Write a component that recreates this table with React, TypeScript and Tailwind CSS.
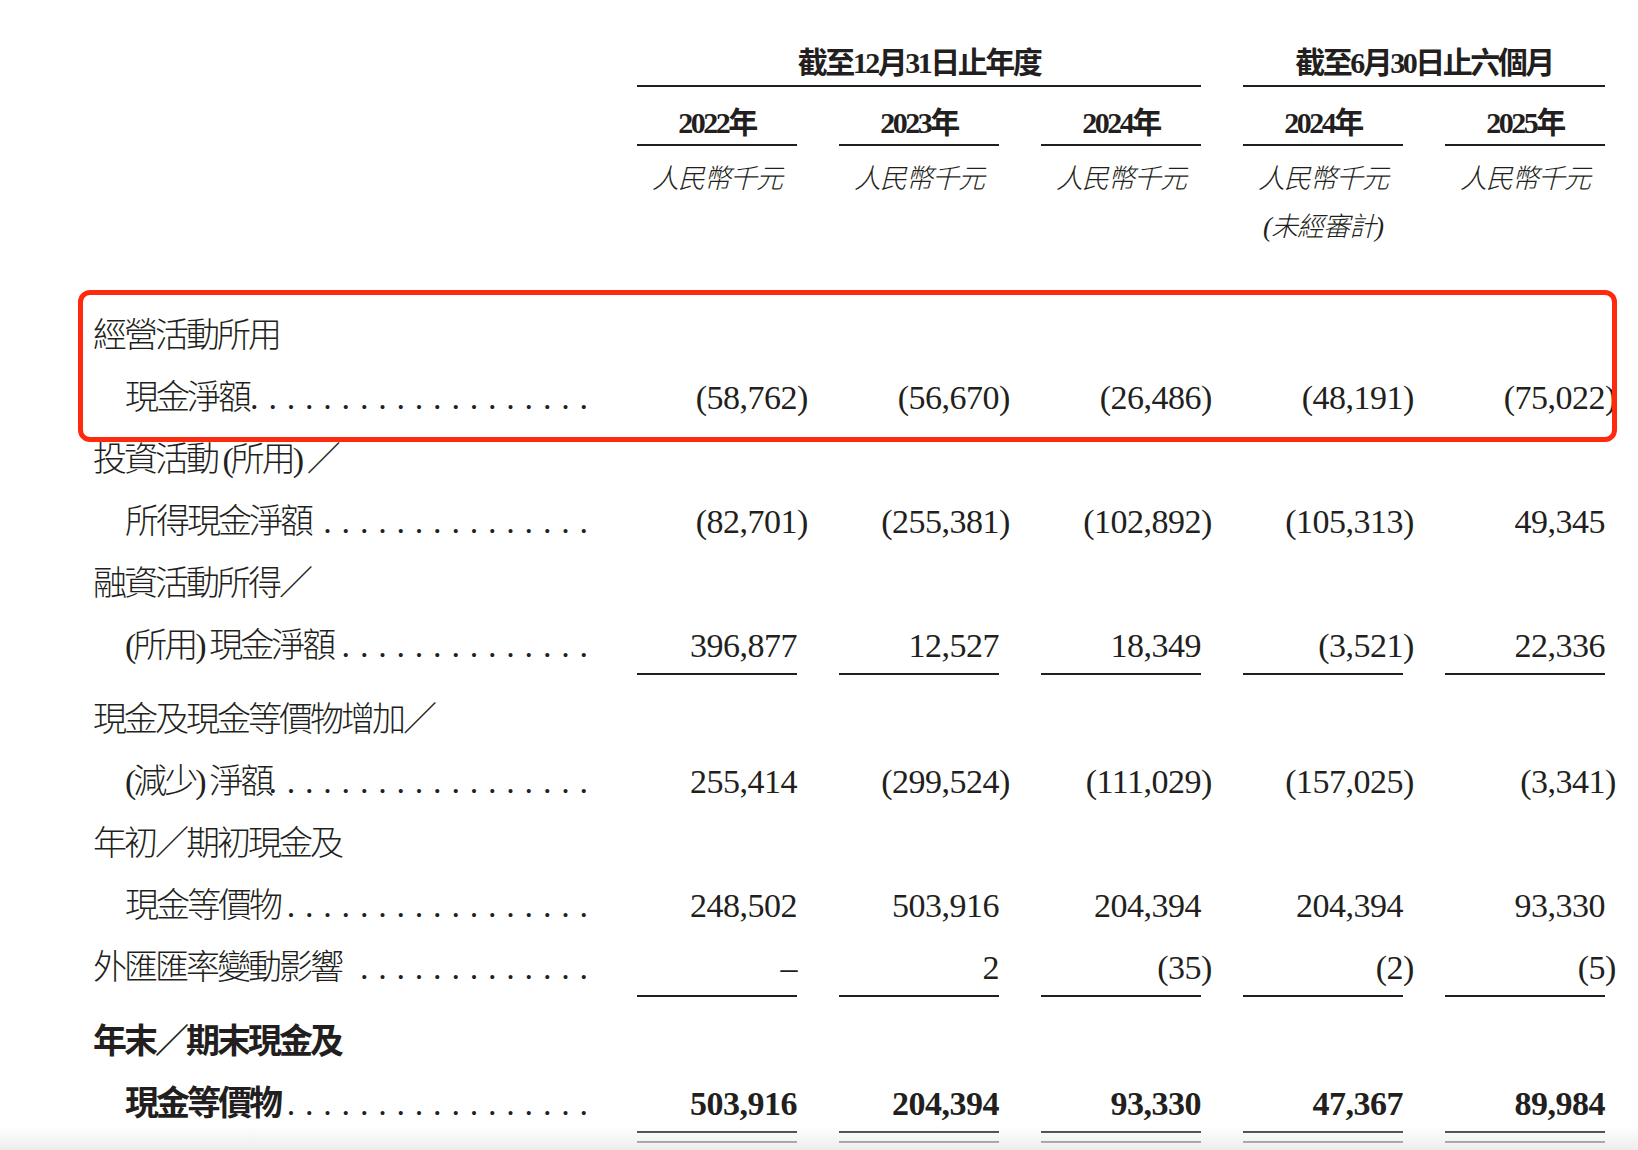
import clsx from 'clsx';

type Rule = 'single' | 'double';

interface LineProps {
  label: string;
  indent?: boolean;
  dots?: boolean;
  values?: string[];
  bold?: boolean;
  rule?: Rule;
  spaced?: boolean;
}

const GRID = 'grid grid-cols-[502px_repeat(5,160px)] gap-x-[42px]';
const INK = 'border-[#231f20]';

// closing bracket hangs past the column edge, as in the printed table
function Amount({ value }: { value: string }) {
  if (value.startsWith('(')) {
    return (
      <>
        {value.slice(0, -1)}
        <span className="inline-block w-0">)</span>
      </>
    );
  }
  return <>{value}</>;
}

function Leader() {
  return (
    <div className="flex min-w-0 flex-1 justify-end overflow-hidden">
      <span className="mr-[-9.8px] whitespace-nowrap font-normal tracking-[9.8px]">
        {'.'.repeat(40)}
      </span>
    </div>
  );
}

function Line({ label, indent, dots, values, bold, rule, spaced }: LineProps) {
  return (
    <div className={clsx(GRID, 'text-[34px] leading-[62px]', bold && 'font-bold', rule === 'single' && 'mb-[12px]')}>
      <div className="flex h-[62px] pr-[7px]">
        <span
          className={clsx(
            'shrink-0 whitespace-pre tracking-[-3px]',
            indent && 'pl-[32px]',
            spaced && 'pr-[12px]',
            !bold && 'font-light'
          )}
        >
          {label}
        </span>
        {dots && <Leader />}
      </div>
      {values?.map((v, i) => {
        const text = (
          <div
            className={clsx(
              'whitespace-nowrap text-right tracking-[-0.5px]',
              rule ? `h-[60px] border-b-2 ${INK}` : 'h-[62px]'
            )}
          >
            <Amount value={v} />
          </div>
        );
        if (rule === 'double') {
          return (
            <div key={i}>
              {text}
              <div className={`h-[10px] border-b-2 ${INK}`} />
            </div>
          );
        }
        return <div key={i}>{text}</div>;
      })}
    </div>
  );
}

export default function App() {
  return (
    <div className="relative h-[1150px] overflow-hidden bg-white font-['Liberation_Serif','Noto_Sans_CJK_TC',serif] text-[#231f20]">
      <div className="ml-[93px] w-[1512px]">
        {/* period headings */}
        <div className={clsx(GRID, 'pt-[45px] text-[30px] font-bold leading-[36px] tracking-[-2.5px]')}>
          <div className={`col-span-3 col-start-2 border-b-2 ${INK} pb-[4px] text-center`}>截至12月31日止年度</div>
          <div className={`col-span-2 col-start-5 border-b-2 ${INK} pb-[4px] text-center`}>截至6月30日止六個月</div>
        </div>

        <div className={clsx(GRID, 'mt-[18px] text-[30px] font-bold leading-[36px] tracking-[-2.5px]')}>
          <div />
          {['2022年', '2023年', '2024年', '2024年', '2025年'].map((y, i) => (
            <div key={i} className={`border-b-2 ${INK} pb-[3px] text-center`}>
              {y}
            </div>
          ))}
        </div>

        <div className={clsx(GRID, 'mt-[8.7px] text-[27px] font-light italic leading-[48px] tracking-[-1px]')}>
          <div />
          <div className="text-center">人民幣千元</div>
          <div className="text-center">人民幣千元</div>
          <div className="text-center">人民幣千元</div>
          <div className="text-center">
            人民幣千元
            <br />
            (未經審計)
          </div>
          <div className="text-center">人民幣千元</div>
        </div>

        {/* cash flow rows */}
        <div className="mt-[54.8px]">
          <div className="relative">
            <Line label="經營活動所用" />
            <Line label="現金淨額" indent dots values={['(58,762)', '(56,670)', '(26,486)', '(48,191)', '(75,022)']} />
            <div className="pointer-events-none absolute -top-[15.5px] -right-[12px] -bottom-[12.5px] -left-[15px] rounded-[12px] border-[5px] border-[#ff2a0d]" />
          </div>

          <Line label="投資活動 (所用) ／" />
          <Line label="所得現金淨額" indent dots values={['(82,701)', '(255,381)', '(102,892)', '(105,313)', '49,345']} />

          <Line label="融資活動所得／" />
          <Line
            label="(所用) 現金淨額"
            indent
            dots
            rule="single"
            values={['396,877', '12,527', '18,349', '(3,521)', '22,336']}
          />

          <Line label="現金及現金等價物增加／" />
          <Line label="(減少) 淨額" indent dots values={['255,414', '(299,524)', '(111,029)', '(157,025)', '(3,341)']} />

          <Line label="年初／期初現金及" />
          <Line label="現金等價物" indent dots values={['248,502', '503,916', '204,394', '204,394', '93,330']} />

          <Line label="外匯匯率變動影響" spaced dots rule="single" values={['–', '2', '(35)', '(2)', '(5)']} />

          <Line label="年末／期末現金及" bold />
          <Line
            label="現金等價物"
            indent
            dots
            bold
            rule="double"
            values={['503,916', '204,394', '93,330', '47,367', '89,984']}
          />
        </div>
      </div>

      {/* faint shading along the bottom edge of the scan */}
      <div className="pointer-events-none absolute inset-x-0 bottom-0 h-[24px] bg-linear-to-b from-transparent to-[#ededed]" />
    </div>
  );
}
